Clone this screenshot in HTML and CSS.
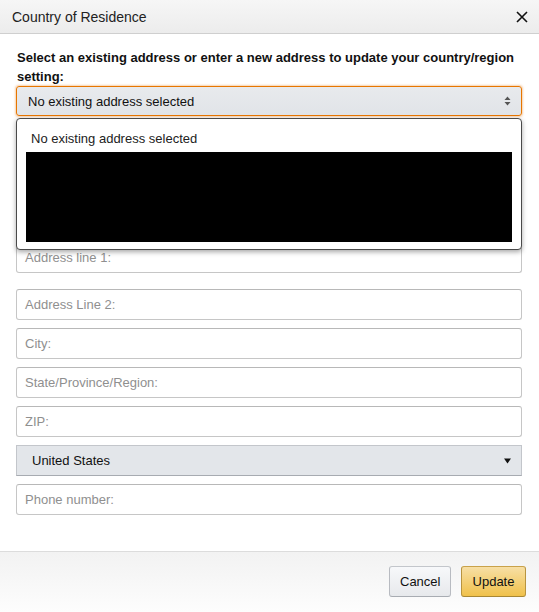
FILE: index.html
```html
<!DOCTYPE html>
<html lang="en">
<head>
<meta charset="utf-8">
<title>Country of Residence</title>
<link rel="stylesheet" href="styles.css">
</head>
<body>
<div class="modal">
  <header class="header">
    <h4 class="title">Country of Residence</h4>
    <button class="close" aria-label="Close">
      <svg width="12" height="12" viewBox="0 0 12 12"><path d="M1 1 L11 11 M11 1 L1 11" stroke="#111" stroke-width="1.6" fill="none"/></svg>
    </button>
  </header>
  <main class="body">
    <p class="label">Select an existing address or enter a new address to update your country/region setting:</p>
    <div class="select-wrap">
      <div class="select focused">
        <span>No existing address selected</span>
        <svg class="updown" width="7" height="10" viewBox="0 0 7 10"><path d="M3.5 0.5 L6.5 4 L0.5 4 Z M0.5 6 L6.5 6 L3.5 9.5 Z" fill="#555"/></svg>
      </div>
      <div class="popup">
        <div class="option">No existing address selected</div>
        <div class="redacted"></div>
      </div>
    </div>
    <div class="fields">
      <div class="input first">Address line 1:</div>
      <div class="input">Address Line 2:</div>
      <div class="input">City:</div>
      <div class="input">State/Province/Region:</div>
      <div class="input">ZIP:</div>
      <div class="country">
        <span>United States</span>
        <svg width="7" height="6" viewBox="0 0 7 6"><path d="M0 0.5 L7 0.5 L3.5 5.5 Z" fill="#111"/></svg>
      </div>
      <div class="input">Phone number:</div>
    </div>
  </main>
  <footer class="footer">
    <button class="btn btn-cancel">Cancel</button>
    <button class="btn btn-primary">Update</button>
  </footer>
</div>
</body>
</html>
```
FILE: styles.css
```css
* { box-sizing: border-box; }
html, body { margin: 0; padding: 0; }
body {
  font-family: "Liberation Sans", Arial, sans-serif;
  font-size: 13px;
  color: #111;
  background: #fff;
  overflow: hidden;
}
.modal {
  width: 539px;
  height: 612px;
  display: flex;
  flex-direction: column;
}
.header {
  height: 34px;
  flex: none;
  display: flex;
  align-items: center;
  justify-content: space-between;
  padding: 0 11px 0 12px;
  background: linear-gradient(#f6f6f6, #ececec);
  border-bottom: 1px solid #cfcfcf;
}
.title {
  margin: 0;
  font-size: 14px;
  font-weight: normal;
  color: #222;
}
.close {
  border: 0;
  background: none;
  padding: 0;
  width: 12px;
  height: 12px;
  display: flex;
}
.body {
  flex: 1;
  padding: 14px 17px 0 16px;
}
.label {
  margin: 0 0 0 1px;
  font-weight: bold;
  line-height: 19px;
  color: #111;
}
.select-wrap { position: relative; }
.select {
  height: 30px;
  display: flex;
  align-items: center;
  justify-content: space-between;
  padding: 0 10px 0 11px;
  border: 1px solid #e77600;
  border-radius: 3px;
  background: linear-gradient(#e8eaed, #e1e4e8);
  box-shadow: 0 0 2px 1px rgba(228, 121, 17, 0.35);
  color: #111;
}
.updown { display: block; }
.popup {
  position: absolute;
  top: 32px;
  left: 0;
  right: 0;
  height: 132px;
  background: #fff;
  border: 1px solid #4a4a4a;
  border-radius: 4px;
  box-shadow: 0 2px 5px rgba(0, 0, 0, 0.35);
  padding: 10px 9px 0 9px;
  z-index: 2;
}
.option {
  padding-left: 5px;
  line-height: 19px;
  height: 23px;
  color: #222;
}
.redacted {
  height: 90px;
  background: #000;
}
.fields {
  display: flex;
  flex-direction: column;
  gap: 8px;
}
.input {
  height: 31px;
  display: flex;
  align-items: center;
  padding: 0 8px;
  border: 1px solid #c6c6c6;
  border-top-color: #b8b8b8;
  border-radius: 3px;
  background: #fff;
  color: #8f8f8f;
}
.input.first { margin-top: 126px; margin-bottom: 8px; }
.country {
  height: 31px;
  display: flex;
  align-items: center;
  justify-content: space-between;
  padding: 0 10px 0 15px;
  border: 1px solid #c3c6cb;
  border-bottom-color: #a7abb1;
  background: #e3e6ea;
  color: #111;
}
.footer {
  flex: none;
  height: 61px;
  display: flex;
  justify-content: flex-end;
  align-items: flex-start;
  gap: 10px;
  padding: 14px 13px 0 0;
  border-top: 1px solid #dcdcdc;
  background: linear-gradient(#f2f2f2, #fdfdfd);
}
.btn {
  height: 31px;
  padding: 0 10px;
  font-family: "Liberation Sans", Arial, sans-serif;
  font-size: 13px;
  color: #111;
  border-radius: 3px;
  border: 1px solid;
  cursor: pointer;
}
.btn-cancel {
  width: 62px;
  background: linear-gradient(#f7f8fa, #e7e9ec);
  border-color: #c3c6cb #b8bbc1 #a8acb2;
}
.btn-primary {
  width: 65px;
  background: linear-gradient(#f7dfa5, #f0c14b);
  border-color: #c9a24a #b8943f #a88734;
}
```
